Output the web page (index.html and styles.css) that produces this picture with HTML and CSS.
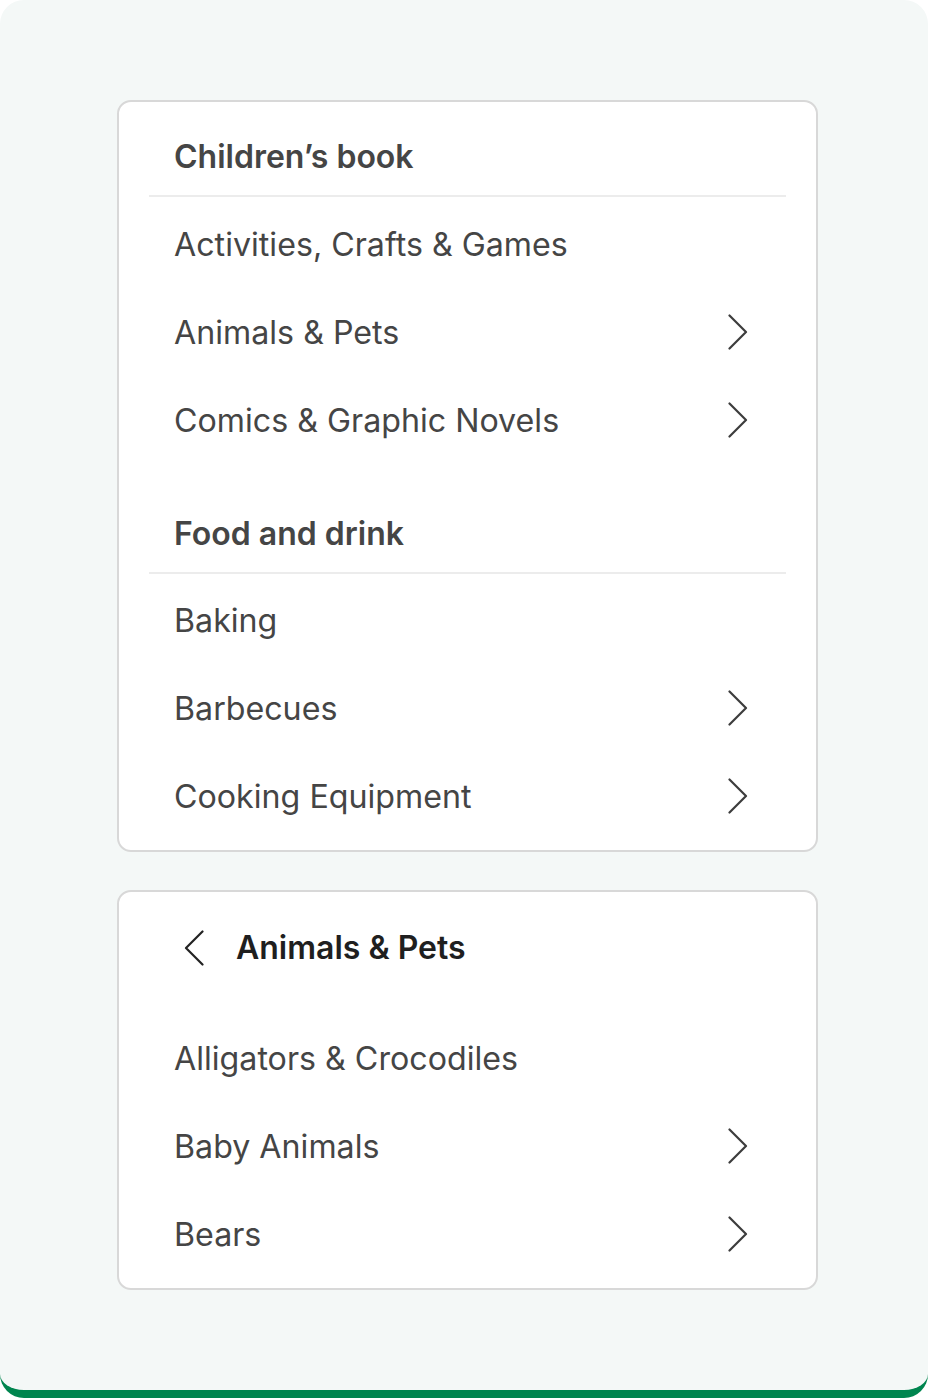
FILE: index.html
```html
<!DOCTYPE html>
<html lang="en">
<head>
<meta charset="utf-8">
<title>Categories</title>
<link rel="stylesheet" href="styles.css">
</head>
<body>
<div class="frame">
  <div class="card">
    <section class="group">
      <h2 class="group-title">Children’s book</h2>
      <ul class="list">
        <li class="item"><span>Activities, Crafts &amp; Games</span></li>
        <li class="item"><span>Animals &amp; Pets</span><svg class="chev" viewBox="0 0 20 36"><path d="M1.5 1.5 L18 18 L1.5 34.5"/></svg></li>
        <li class="item"><span>Comics &amp; Graphic Novels</span><svg class="chev" viewBox="0 0 20 36"><path d="M1.5 1.5 L18 18 L1.5 34.5"/></svg></li>
      </ul>
    </section>
    <section class="group group-next">
      <h2 class="group-title">Food and drink</h2>
      <ul class="list">
        <li class="item"><span>Baking</span></li>
        <li class="item"><span>Barbecues</span><svg class="chev" viewBox="0 0 20 36"><path d="M1.5 1.5 L18 18 L1.5 34.5"/></svg></li>
        <li class="item"><span>Cooking Equipment</span><svg class="chev" viewBox="0 0 20 36"><path d="M1.5 1.5 L18 18 L1.5 34.5"/></svg></li>
      </ul>
    </section>
  </div>

  <div class="card card-sub">
    <div class="sub-head">
      <svg class="back" viewBox="0 0 20 36"><path d="M18.5 1.5 L2 18 L18.5 34.5"/></svg>
      <h2 class="sub-title">Animals &amp; Pets</h2>
    </div>
    <ul class="list sub-list">
      <li class="item"><span>Alligators &amp; Crocodiles</span></li>
      <li class="item"><span>Baby Animals</span><svg class="chev" viewBox="0 0 20 36"><path d="M1.5 1.5 L18 18 L1.5 34.5"/></svg></li>
      <li class="item"><span>Bears</span><svg class="chev" viewBox="0 0 20 36"><path d="M1.5 1.5 L18 18 L1.5 34.5"/></svg></li>
    </ul>
  </div>
</div>
</body>
</html>
```

FILE: styles.css
```css
* { box-sizing: border-box; }
html, body { margin: 0; padding: 0; background: #ffffff; }
body { font-family: Inter, "Noto Sans", "Liberation Sans", sans-serif; }

.frame {
  width: 928px;
  height: 1398px;
  background: #f4f8f7;
  border-radius: 24px;
  border-bottom: 8px solid #00854f;
  padding: 100px 0 0 117px;
  display: flex;
  flex-direction: column;
  gap: 38px;
}

.card {
  width: 701px;
  background: #ffffff;
  border: 2px solid #d8d8d8;
  border-radius: 14px;
  padding: 37px 30px 10px 30px;
}

.group-title {
  margin: 0;
  padding: 0 0 20px 25px;
  font-size: 32px;
  line-height: 36px;
  font-weight: 600;
  color: #454545;
  border-bottom: 2px solid #ececec;
}

.group-next { margin-top: 52px; }

.list {
  list-style: none;
  margin: 0;
  padding: 3px 0 0 0;
}

.group-next .list { padding-top: 2px; }

.item {
  height: 88px;
  display: flex;
  align-items: center;
  justify-content: space-between;
  padding: 0 38px 0 25px;
  font-size: 32.2px;
  color: #454545;
}

.chev, .back {
  width: 20px;
  height: 36px;
  fill: none;
  stroke: #3c3c3c;
  stroke-width: 2.2;
  stroke-linecap: round;
  stroke-linejoin: round;
}

.card-sub { padding-top: 37px; padding-bottom: 10px; }

.sub-head {
  display: flex;
  align-items: center;
  gap: 32px;
  padding-left: 35px;
  height: 38px;
}

.back { stroke: #222222; }

.sub-title {
  margin: 0;
  font-size: 32px;
  line-height: 36px;
  font-weight: 600;
  color: #1f1f1f;
}

.sub-list { padding-top: 47px; }
```
